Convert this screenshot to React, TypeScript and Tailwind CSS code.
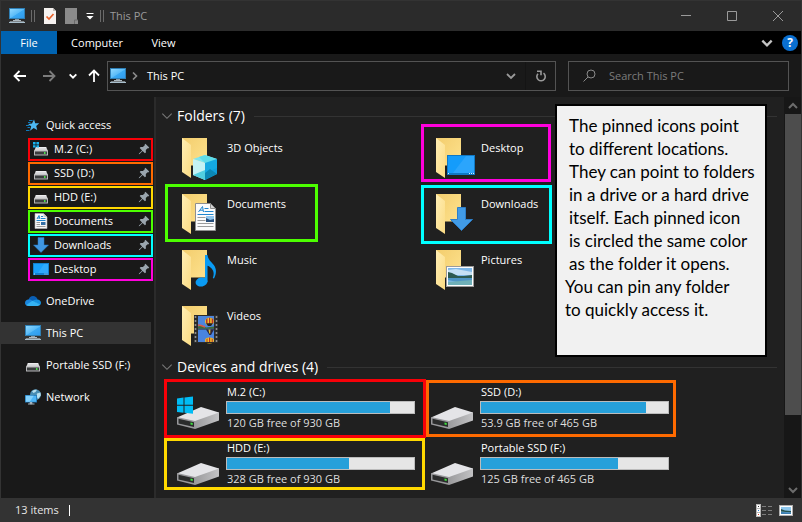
import type { ReactNode } from "react";

function MonitorIcon() {
  return (
    <svg viewBox="0 0 16 16" className="size-4 shrink-0" aria-hidden="true">
      <defs>
        <linearGradient id="screen" x1="0" y1="0" x2="1" y2="1">
          <stop offset="0" stopColor="#8fd8ff" />
          <stop offset="0.5" stopColor="#5bbcf8" />
          <stop offset="0.55" stopColor="#3aa9f3" />
          <stop offset="1" stopColor="#2f9bee" />
        </linearGradient>
      </defs>
      <rect x="0" y="0" width="16" height="11" fill="#2f7fb5" />
      <rect x="1" y="1" width="14" height="9" fill="url(#screen)" />
      <rect x="6" y="11" width="4" height="2" fill="#8b9aa3" />
      <rect x="4" y="12" width="8" height="1" fill="#aebac2" />
      <path d="M1 13.500h14l1 1.500H0z" fill="#d3e2ec" />
      <rect x="0" y="14" width="16" height="1" fill="#a9bfcd" />
    </svg>
  );
}

function StarIcon() {
  return (
    <svg viewBox="0 0 16 16" className="size-4 shrink-0" aria-hidden="true">
      <path d="M9 2.500l1.200 3.700 4 .1-3 2.600 1 4.100-3.500-1.900-3.700 2.700 1.200-4.600-3.200-2.200 4-.4z" fill="#4db9f3" />
      <path d="M4 3.500h3.500M3 5.500h2.500M1 8.500h3.500M2.500 10.500h2.500M1 13.500h3.500" stroke="#0f78b8" strokeWidth="1" />
    </svg>
  );
}

function SmallDriveIcon({ system = false }: { system?: boolean }) {
  return (
    <svg viewBox="0 0 16 16" className="size-4 shrink-0" aria-hidden="true">
      <path d="M3 6h10l2 4H1z" fill="#d5d5d7" />
      <path d="M3 6h10l.6 1.2H2.4z" fill="#ececee" />
      <rect x="1" y="9.500" width="14" height="5" rx="0.6" fill="#b7b7b9" />
      <rect x="2" y="10.500" width="12" height="3" fill="#3b3d3e" />
      <rect x="11" y="11" width="1.500" height="2" fill="#4be04b" />
      {system && (
        <path d="M0 1h2.600v2.400H0zM3.400 1H6v2.400H3.400zM0 4.200h2.600v2.400H0zM3.400 4.200H6v2.400H3.400z" fill="#19b5f1" />
      )}
    </svg>
  );
}

function PageIcon() {
  return (
    <svg viewBox="0 0 16 16" className="size-4 shrink-0" aria-hidden="true">
      <path d="M2 .5h8.500l3.500 3.500v11.500H2z" fill="#f7f7f7" stroke="#b5b5b5" strokeWidth="0.6" />
      <path d="M10.500 .5v3.500H14z" fill="#c9c9c9" />
      <path d="M4 6l2-3.500 1 3.500M4.600 5h2M8 3.500h2M8 5.500h4.500M3.500 7.500h9" stroke="#1e84cc" fill="none" />
      <path d="M3.500 9.500h3.500M3.500 11.500h3.500M3.500 13.500h9" stroke="#9a9a9a" />
      <rect x="8" y="9" width="4.500" height="3" fill="#356fa4" />
    </svg>
  );
}

function DownloadIcon() {
  return (
    <svg viewBox="0 0 16 16" className="size-4 shrink-0" aria-hidden="true">
      <path d="M5 .5h6V8h4.500L8 15.500.5 8H5z" fill="#3f97e3" stroke="#2a78c0" strokeWidth="0.5" />
    </svg>
  );
}

function DesktopIcon() {
  return (
    <svg viewBox="0 0 16 16" className="size-4 shrink-0" aria-hidden="true">
      <rect x="0" y="2" width="16" height="12" fill="#1380cf" />
      <rect x="1" y="3" width="14" height="9" fill="#18a0fb" />
      <path d="M11 3h4v9H5z" fill="#2fa9fc" />
      <path d="M1 13h1M11.500 13h1M13.500 13h1" stroke="#cfeaff" />
    </svg>
  );
}

function CloudIcon() {
  return (
    <svg viewBox="0 0 16 16" className="size-4 shrink-0" aria-hidden="true">
      <path d="M3.500 7C4 4.300 6 3 8 3c2.200 0 4 1.300 4.600 3.600L8 9z" fill="#0a5fb4" />
      <path d="M3.500 6.600c1.600-.3 3 .4 4.500 1.600l-5.500 4.500C.9 12.300 0 11.200 0 9.900c0-1.700 1.500-3.200 3.500-3.300z" fill="#1a86dd" />
      <path d="M12.300 6.400c2 0 3.700 1.500 3.700 3.300 0 .8-.3 1.500-.8 2.100L7 8.200c1.500-1.200 3.200-1.900 5.300-1.800z" fill="#1490df" />
      <path d="M7.400 7.800l8 3.800c-.6.9-1.500 1.400-2.600 1.400H3.500c-.9 0-1.700-.4-2.300-1z" fill="#34b2f3" />
    </svg>
  );
}

function NetworkIcon() {
  return (
    <svg viewBox="0 0 16 16" className="size-4 shrink-0" aria-hidden="true">
      <circle cx="10.500" cy="5.600" r="5.400" fill="#4a8db2" />
      <path d="M7 2.200c2-1.600 3.500-1.700 5-1.400L10.500 3 8.500 4zM12 4.500l3.500-1 .3 3-2.800 3.500-1.500-3z" fill="#b9e0ee" />
      <rect x="0" y="6" width="12" height="7.500" fill="#2277b5" />
      <rect x="0.800" y="6.800" width="10.400" height="6" fill="#4db5f6" />
      <path d="M.8 6.800h8l-4 6h-4z" fill="#83d1fd" />
      <path d="M5 13.500h2v1.200H5zM3 15h6.500" stroke="#b4c5cf" strokeWidth="0.9" />
    </svg>
  );
}

function PinIcon() {
  return (
    <svg viewBox="0 0 12 12" className="size-3 shrink-0" aria-hidden="true">
      <path d="M7.400.8l3.800 3.800-1 .8-.6-.2-1.800 1.900.1 2.300-1 .9-2.300-2.400L1.600 11l-.8.200.2-.8 3.100-3L1.700 5l.9-1 2.300.1 1.900-1.800-.2-.6z" fill="#9aa5ae" />
    </svg>
  );
}

function ChevronDown({ className, width }: { className: string; width: number }) {
  return (
    <svg viewBox="0 0 12 12" className={className} fill="none" stroke="currentColor" strokeWidth={width} aria-hidden="true">
      <path d="M2 4l4 4 4-4" />
    </svg>
  );
}

/* Large icons: an open folder with an emblem in front of it. */
function FolderIcon({ children }: { children: ReactNode }) {
  return (
    <svg viewBox="0 0 48 48" className="size-12 shrink-0" aria-hidden="true">
      <defs>
        <linearGradient id="folderBack" x1="0" y1="0" x2="1" y2="1">
          <stop offset="0" stopColor="#f3cd6d" />
          <stop offset="1" stopColor="#ffe593" />
        </linearGradient>
        <linearGradient id="folderFlap" x1="0" y1="0" x2="1" y2="1">
          <stop offset="0" stopColor="#ffeeb4" />
          <stop offset="1" stopColor="#fbdb83" />
        </linearGradient>
      </defs>
      <path d="M7 6h25v28h2v6H7z" fill="url(#folderBack)" />
      <path d="M15 40v-6h1v-.500h18V41H15z" fill="#202020" />
      <path d="M7 6l9 7v33l-9-6z" fill="url(#folderFlap)" />
      {children}
    </svg>
  );
}

const cubeArt = (
  <g>
    <path d="M18 27l12-4 12 4-12 4z" fill="#7fe6f0" />
    <path d="M18 27l12 4v17l-12-5z" fill="#c4f2f4" />
    <path d="M30 27l12 0v15l-12 6z" fill="#109fdc" />
    <path d="M30 31l12-4v9l-12 5z" fill="#14a9e2" />
    <path d="M30 41l5-4 7 5-12 6z" fill="#0b87b4" />
    <path d="M18 43l12-5v10z" fill="#52cfe0" />
    <path d="M24 25l6-2 12 4-12 4z" fill="#5fdce9" />
  </g>
);

const documentArt = (
  <g>
    <path d="M20.500 15.500h15l5 5v22h-20z" fill="#fbfbfb" stroke="#8f8f8f" />
    <path d="M35.500 15.500v5h5z" fill="#d4d4d4" stroke="#8f8f8f" />
    <path d="M23.500 24l4-5.500 1 5.500M25 22.200h3M29.500 20.500h4M29.500 23.500h9M22.500 26.500h16" stroke="#1f86cf" fill="none" />
    <path d="M22.500 29.500h8M22.500 32.500h8M22.500 35.500h16M22.500 38.500h16" stroke="#9b9b9b" />
    <rect x="31" y="28" width="8" height="6" fill="#8fc5ee" />
    <path d="M31 34v-4l4 2 4-1v3z" fill="#274f7c" />
  </g>
);

const musicArt = (
  <g fill="#0a9bf3">
    <ellipse cx="26.500" cy="38" rx="6" ry="4.500" transform="rotate(-12 26.500 38)" />
    <path d="M30 11h2.500c.6 4.500 3.500 6.500 6.300 10 3 4 2.700 9 .2 13.500-.3-.2-.9-.4-1.200-.6 1.700-4 1-8-2.300-10.500-1.100-.9-2-1.400-3-1.600V38H30z" />
  </g>
);

const videoArt = (
  <g>
    <rect x="19" y="15" width="24" height="28" fill="#2b2b2b" />
    <path d="M20.500 16v27M41.500 16v27" stroke="#8e8e8e" strokeWidth="1.600" strokeDasharray="2 2" />
    <rect x="23" y="16" width="16" height="12.500" fill="#4e86dc" />
    <rect x="23" y="29.500" width="16" height="12.500" fill="#4a84e0" />
    <path d="M23 28.500v-2l4-1 4 2 8-1v2z" fill="#3f6c34" />
    <path d="M23 25l3 .5 4 1.500" stroke="#d85a4c" strokeWidth="1.500" />
    <ellipse cx="34.500" cy="21.500" rx="4.500" ry="3.800" fill="#f0c42a" />
    <path d="M31 19.500l1.500-1.500v6L31 23zM34 17.700h1.200v7H34zM36.700 18l1.600 1.500V23l-1.600 1z" fill="#b8302c" />
    <path d="M31 23.300h7L36 26h-3z" fill="#232323" />
    <path d="M31 29.500h8l-3 5.500h-1.600z" fill="#2c2640" />
    <path d="M33.500 29.500h2l-.3 4h-1z" fill="#e4bd2b" />
    <ellipse cx="34.500" cy="40.500" rx="4.500" ry="3" fill="#efc429" />
    <path d="M31.500 39l1-.8V42h-1zM34 37.500h1.200V42H34zM36.700 38.200l1 .8v3h-1z" fill="#b8302c" />
    <path d="M23 42h16v1H23z" fill="#2b2b2b" />
  </g>
);

const desktopArt = (
  <g>
    <rect x="18" y="23" width="28" height="20" fill="#1078c4" />
    <rect x="19" y="24" width="26" height="17" fill="#149cfb" />
    <path d="M37 24h8v17H24z" fill="#2ba5fc" />
    <path d="M19 41.500h1M40 41.500h1M42 41.500h1M44 41.500h1" stroke="#d9efff" />
  </g>
);

const downloadArt = (
  <path d="M28.500 19.500h8v12h7L32.500 42.500 21.500 31.500h7z" fill="#419be6" stroke="#2d7ec8" />
);

const pictureArt = (
  <g>
    <rect x="17.500" y="22.500" width="27" height="20" fill="#fdfdfd" stroke="#9a9a9a" />
    <rect x="19" y="24" width="24" height="17" fill="#7db7e8" />
    <path d="M19 26l8-1 16 3v3H19z" fill="#c5e0f5" />
    <path d="M19 34v-6l4 1 6 3 6 0 8-1v3z" fill="#2d5a50" />
    <path d="M19 34h24v4l-10 1-14-3z" fill="#4d94c4" />
    <path d="M19 38l12-1 12-1v5H19z" fill="#6fb0b8" />
  </g>
);

function DriveIcon({ system }: { system?: boolean }) {
  return (
    <svg viewBox="0 0 48 48" className="size-12 shrink-0" aria-hidden="true">
      <defs>
        <linearGradient id="driveSide" x1="0" y1="0" x2="1" y2="0">
          <stop offset="0" stopColor="#9b9b9d" />
          <stop offset="1" stopColor="#c2c2c4" />
        </linearGradient>
      </defs>
      <path d="M2 34.500L26 24l18 5.500v1L21 40z" fill="#e4e4e7" />
      <path d="M20 38l24-8.500v8L20 46z" fill="url(#driveSide)" />
      <path d="M2 34l18 4v8L2 41.500z" fill="#98989b" />
      <path d="M3.500 35.700L19 39.300V44L3.500 40.500z" fill="#2b2c2c" />
      <path d="M15.500 39.600l2.200.5v1.800l-2.200-.5z" fill="#3ee23e" />
      {system && (
        <path d="M2 15.500l6.500-1v7.200H2zM9.500 14.400L18 13.500v8.200H9.500zM2 22.700h6.500v7.100L2 29zM9.500 22.700H18v8l-8.500-1z" fill="#00bcf5" />
      )}
    </svg>
  );
}

type Place = { name: string; icon: ReactNode; mark: string };

const pinned: Place[] = [
  { name: "M.2 (C:)", icon: <SmallDriveIcon system />, mark: "border-[#f80008]" },
  { name: "SSD (D:)", icon: <SmallDriveIcon />, mark: "border-[#ff6a00]" },
  { name: "HDD (E:)", icon: <SmallDriveIcon />, mark: "border-[#ffd800]" },
  { name: "Documents", icon: <PageIcon />, mark: "border-[#4cff00]" },
  { name: "Downloads", icon: <DownloadIcon />, mark: "border-[#00ffff]" },
  { name: "Desktop", icon: <DesktopIcon />, mark: "border-[#ff00dc]" },
];

const roots = [
  { name: "OneDrive", icon: <CloudIcon />, active: false },
  { name: "This PC", icon: <MonitorIcon />, active: true },
  { name: "Portable SSD (F:)", icon: <SmallDriveIcon />, active: false },
  { name: "Network", icon: <NetworkIcon />, active: false },
];

const folders: Place[] = [
  { name: "3D Objects", icon: cubeArt, mark: "" },
  { name: "Desktop", icon: desktopArt, mark: "left-0.5 -top-1 h-[58px] w-[130px] border-[#ff00dc]" },
  { name: "Documents", icon: documentArt, mark: "left-0 top-0 h-[58px] w-[153px] border-[#4cff00]" },
  { name: "Downloads", icon: downloadArt, mark: "left-0.5 top-px h-[59px] w-[131px] border-[#00ffff]" },
  { name: "Music", icon: musicArt, mark: "" },
  { name: "Pictures", icon: pictureArt, mark: "" },
  { name: "Videos", icon: videoArt, mark: "" },
];

const drives = [
  { name: "M.2 (C:)", free: "120 GB free of 930 GB", used: 87, mark: "-left-px top-0 h-[59px] w-[262px] border-[#f80008]" },
  { name: "SSD (D:)", free: "53.9 GB free of 465 GB", used: 88, mark: "left-[7px] top-px h-[57px] w-[250px] border-[#ff6a00]" },
  { name: "HDD (E:)", free: "328 GB free of 930 GB", used: 65, mark: "-left-px top-[3px] h-[52px] w-[261px] border-[#ffd800]" },
  { name: "Portable SSD (F:)", free: "125 GB free of 465 GB", used: 73, mark: "" },
];

const noteLines = [
  "The pinned icons point",
  "to different locations.",
  "They can point to folders",
  "in a drive or a hard drive",
  "itself. Each pinned icon",
  "is circled the same color",
  "as the folder it opens.",
];

function TitleBar() {
  return (
    <header className="flex h-[31px] items-center border-t border-[#333] bg-[#2b2b2b] pl-2">
      <MonitorIcon />
      <span className="ml-1.5 h-3 w-1 border-x border-[#6a6a6a]" />
      <button aria-label="Properties" className="ml-[9px]">
        <svg viewBox="0 0 12 16" className="h-4 w-3" aria-hidden="true">
          <path d="M0 0h9l3 3v13H0z" fill="#f5f2f0" />
          <path d="M9 0v3h3z" fill="#bdb9b6" />
          <path d="M2.500 8.500L5 11l4.500-5" fill="none" stroke="#e8622c" strokeWidth="1.700" />
        </svg>
      </button>
      <button aria-label="New folder" className="ml-[9px]">
        <svg viewBox="0 0 13 16" className="h-4 w-[13px]" aria-hidden="true">
          <path d="M0 0h12v12h1v4H0z" fill="#8b8b8b" />
          <path d="M9.500 16v-4H13" fill="none" stroke="#6b6b6b" />
        </svg>
      </button>
      <button aria-label="Customize Quick Access Toolbar" className="ml-2">
        <svg viewBox="0 0 8 8" className="size-2" aria-hidden="true">
          <path d="M.5 1.500h7" stroke="#fff" />
          <path d="M.5 4h7L4 7.500z" fill="#fff" />
        </svg>
      </button>
      <span className="ml-1.5 h-3 w-1 border-x border-[#6a6a6a]" />
      <h1 className="ml-1.5 flex-1 text-[11px]/4 text-[#9a9a9a]">This PC</h1>
      <div className="flex h-full text-[#9a9a9a]">
        <button aria-label="Minimize" className="grid w-[46px] place-items-center">
          <svg viewBox="0 0 10 10" className="size-2.5" stroke="currentColor"><path d="M0 4.500h10" /></svg>
        </button>
        <button aria-label="Maximize" className="grid w-[46px] place-items-center">
          <svg viewBox="0 0 10 10" className="size-2.5" stroke="currentColor" fill="none"><path d="M.5.5h9v9h-9z" /></svg>
        </button>
        <button aria-label="Close" className="grid w-[46px] place-items-center">
          <svg viewBox="0 0 10 10" className="size-2.5" stroke="currentColor"><path d="M0 0l10 10M10 0L0 10" /></svg>
        </button>
      </div>
    </header>
  );
}

function RibbonTabs() {
  return (
    <div className="flex h-[23px] items-stretch bg-black text-[11px]/4">
      <button className="w-14 bg-[#0063b1]">File</button>
      <button className="w-20">Computer</button>
      <button className="w-[53px]">View</button>
      <div className="ml-auto flex items-center gap-2 pr-[3px]">
        <button aria-label="Expand the ribbon">
          <ChevronDown className="size-3.5 text-[#c4c4c4]" width={2} />
        </button>
        <button aria-label="Help" className="grid size-4 place-items-center rounded-full bg-[#0a6fd0] text-xs font-bold">?</button>
      </div>
    </div>
  );
}

function AddressRow() {
  return (
    <div className="flex h-[43px] items-center pl-3 pr-3">
      <button aria-label="Back">
        <svg viewBox="0 0 13 12" className="h-3 w-[13px]" fill="none" stroke="#fff" strokeWidth="1.800"><path d="M13 6H1.500M6.500 1l-5 5 5 5" /></svg>
      </button>
      <button aria-label="Forward" className="ml-[17px]">
        <svg viewBox="0 0 13 12" className="h-3 w-[13px]" fill="none" stroke="#7c7c7c" strokeWidth="1.800"><path d="M0 6h11.500M6.500 1l5 5-5 5" /></svg>
      </button>
      <button aria-label="Recent locations" className="ml-3">
        <ChevronDown className="size-2.5" width={2.2} />
      </button>
      <button aria-label="Up" className="ml-2.5">
        <svg viewBox="0 0 12 13" className="h-[13px] w-3" fill="none" stroke="#fff" strokeWidth="1.800"><path d="M6 13V1.500M1 6.500l5-5 5 5" /></svg>
      </button>
      <div className="ml-[7px] flex h-[30px] flex-1 items-center border border-[#535353] pl-0.5">
        <MonitorIcon />
        <svg viewBox="0 0 6 8" className="ml-1.5 h-2 w-1.5" fill="none" stroke="#8c8c8c" strokeWidth="1.600"><path d="M1 .5L4.500 4 1 7.500" /></svg>
        <span className="ml-[9px] flex-1 text-[11px]/4">This PC</span>
        <button aria-label="Previous locations" className="mr-2">
          <ChevronDown className="size-3 text-[#9a9a9a]" width={1.8} />
        </button>
        <button aria-label="Refresh" className="grid h-full w-[30px] place-items-center border-l border-[#141414]">
          <svg viewBox="0 0 12 12" className="size-3" fill="none" stroke="#9a9a9a" strokeWidth="1.600">
            <path d="M8.500 3.200A4.200 4.200 0 1 1 3 3.700" />
            <path d="M2 1.200h4v4" />
          </svg>
        </button>
      </div>
      <label className="ml-3 flex h-[30px] w-[221px] items-center border border-[#535353] pl-3.5">
        <svg viewBox="0 0 13 13" className="size-[13px]" fill="none" stroke="#8a8a8a"><circle cx="8" cy="5" r="4" /><path d="M5 8L.5 12.500" /></svg>
        <input aria-label="Search This PC" placeholder="Search This PC" className="ml-[13px] min-w-0 flex-1 bg-transparent text-[11px]/4 outline-none placeholder:text-[#7c7c7c]" />
      </label>
    </div>
  );
}

function Sidebar() {
  return (
    <nav aria-label="Navigation pane" className="w-[153px] shrink-0 bg-[#191919] pt-4 text-[11px]/4">
      <button className="flex h-6 w-full items-center gap-[5px] pl-6">
        <StarIcon />
        Quick access
      </button>
      {pinned.map((p) => (
        <button key={p.name} className="relative flex h-6 w-full items-center gap-[5px] pl-8 pr-1">
          {p.icon}
          <span className="flex-1 text-left">{p.name}</span>
          <PinIcon />
          <span className={`absolute left-[27px] right-px top-px h-[23px] border-2 ${p.mark}`} />
        </button>
      ))}
      {roots.map((r) => (
        <div key={r.name} className="pr-[3px] pt-2">
          <button className={`flex h-6 w-full items-center gap-[5px] whitespace-nowrap border-y border-[#191919] pl-6 ${r.active ? "bg-[#333]" : ""}`}>
            {r.icon}
            {r.name}
          </button>
        </div>
      ))}
    </nav>
  );
}

function GroupHeading({ children }: { children: string }) {
  return (
    <h2 className="flex h-6 items-center gap-[3px] pl-1 pr-[7px] text-sm">
      <ChevronDown className="size-3.5 text-[#7a7a7a]" width={0.9} />
      {children}
      <span className="ml-1.5 h-px flex-1 bg-[#333]" />
    </h2>
  );
}

function Content() {
  return (
    <main className="min-w-0 flex-1 bg-[#202020] pt-[7px]">
      <GroupHeading>Folders (7)</GroupHeading>
      <ul className="grid grid-cols-[254px_254px] pl-[9px] text-[11px]/4">
        {folders.map((f) => (
          <li key={f.name} className="relative flex h-14 gap-1 pl-2.5 pt-1">
            <FolderIcon>{f.icon}</FolderIcon>
            <span className="pt-2">{f.name}</span>
            {f.mark && <span className={`absolute border-3 ${f.mark}`} />}
          </li>
        ))}
      </ul>
      <div className="h-[3px]" />
      <GroupHeading>Devices and drives (4)</GroupHeading>
      <ul className="grid grid-cols-[254px_254px] pl-[9px] text-[11px]/4">
        {drives.map((d) => (
          <li key={d.name} className="relative flex h-14 gap-[3px] pl-2.5 pt-1">
            <DriveIcon system={d.name === "M.2 (C:)"} />
            <div className="w-[189px]">
              <div className="h-[18px] pl-px pt-px">{d.name}</div>
              <div role="meter" aria-label={`${d.name} space used`} aria-valuemin={0} aria-valuemax={100} aria-valuenow={d.used} className="h-[13px] border border-[#bcbcbc] bg-[#e6e6e6]">
                <div className="h-full bg-[#26a0da]" style={{ width: `${d.used}%` }} />
              </div>
              <div className="pl-px pt-px text-[#dedede]">{d.free}</div>
            </div>
            {d.mark && <span className={`absolute border-3 ${d.mark}`} />}
          </li>
        ))}
      </ul>
    </main>
  );
}

function ScrollBar() {
  return (
    <div className="flex w-[17px] shrink-0 flex-col bg-[#171717]">
      <button aria-label="Scroll up" className="grid h-[17px] place-items-center">
        <ChevronDown className="size-3 rotate-180 text-[#6c6c6c]" width={2} />
      </button>
      <div className="ml-px h-[301px] bg-[#4d4d4d]" />
      <button aria-label="Scroll down" className="mt-auto grid h-[17px] place-items-center">
        <ChevronDown className="size-3 text-[#6c6c6c]" width={2} />
      </button>
    </div>
  );
}

function StatusBar() {
  return (
    <footer className="flex h-6 items-center bg-[#333] pl-3.5 pr-2 text-[11px]/4 text-[#e6e6e6]">
      13 items
      <span className="ml-2.5 h-[11px] w-px bg-white" />
      <button aria-label="Details view" className="ml-auto">
        <svg viewBox="0 0 16 13" className="h-[13px] w-4" aria-hidden="true">
          <path d="M0 0h5v13H0z" fill="#b9b9b9" />
          <path d="M1 1h3v3H1zM1 5h3v3H1zM1 9h3v3H1z" fill="#fff" />
          <path d="M2 2h1v1H2z" fill="#333" /><path d="M2 6h1v1H2z" fill="#2a7fd4" /><path d="M2 10h1v1H2z" fill="#d43a2a" />
          <path d="M6 2.500h4M12 2.500h4M6 6.500h4M12 6.500h4M6 10.500h4M12 10.500h4" stroke="#7d7d7d" />
        </svg>
      </button>
      <button aria-label="Large thumbnails view" className="ml-[7px]">
        <svg viewBox="0 0 14 11" className="h-[11px] w-3.5" aria-hidden="true">
          <path d="M0 0h14v11H0z" fill="#b0b0b0" /><path d="M1 1h12v9H1z" fill="#fff" />
          <path d="M2 2h10v7H2z" fill="#8ec8ee" /><path d="M2 4l4 1.500 6 .5v1.500L2 6.500z" fill="#27534f" /><path d="M2 7l10 .5V9H2z" fill="#3d7fb2" />
        </svg>
      </button>
    </footer>
  );
}

export default function App() {
  return (
    <div className="relative flex min-h-screen flex-col border-x border-[#333] bg-[#191919] font-['Open_Sans',sans-serif] text-white">
      <TitleBar />
      <RibbonTabs />
      <AddressRow />
      <div className="flex flex-1">
        <Sidebar />
        <div className="w-0.5 bg-[#2b2b2b]" />
        <Content />
        <ScrollBar />
      </div>
      <StatusBar />
      <aside className="absolute left-[554px] top-[104px] h-[253px] w-[212px] whitespace-nowrap border-2 border-black bg-[#f1f1f1] pt-2 font-['Lato',sans-serif] text-[17px] leading-[23px] text-black">
        <p className="pl-3">
          {noteLines.map((line) => (
            <span key={line} className="block">{line}</span>
          ))}
        </p>
        <p className="pl-2">
          <span className="block">You can pin any folder</span>
          <span className="block">to quickly access it.</span>
        </p>
      </aside>
    </div>
  );
}
